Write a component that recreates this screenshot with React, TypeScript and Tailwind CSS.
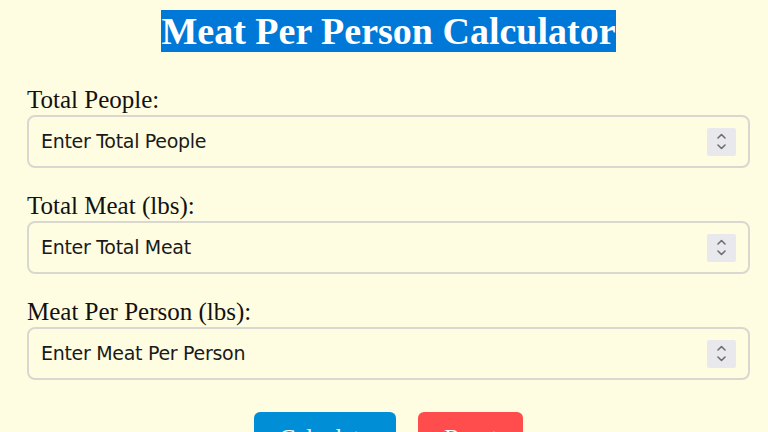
const fields = [
  { label: "Total People:", placeholder: "Enter Total People" },
  { label: "Total Meat (lbs):", placeholder: "Enter Total Meat" },
  { label: "Meat Per Person (lbs):", placeholder: "Enter Meat Per Person" },
]

function Spinner() {
  return (
    <div className="flex flex-col items-center justify-center gap-[5px] w-[29px] h-[28px] bg-[#e9e9ed] rounded-[2px] shrink-0">
      <svg width="9" height="6" viewBox="0 0 9 6" fill="none">
        <path d="M1 5 L4.5 1.5 L8 5" stroke="#6e6e78" strokeWidth="1.6" strokeLinecap="round" strokeLinejoin="round" />
      </svg>
      <svg width="9" height="6" viewBox="0 0 9 6" fill="none">
        <path d="M1 1 L4.5 4.5 L8 1" stroke="#6e6e78" strokeWidth="1.6" strokeLinecap="round" strokeLinejoin="round" />
      </svg>
    </div>
  )
}

export default function App() {
  return (
    <div className="min-h-screen w-full bg-[#fffde1] font-['Liberation_Serif',serif] text-[#111]">
      <div className="w-[723px] ml-[27px] flex flex-col">
        {/* Title */}
        <h1 className="mt-[10px] text-center text-[38px] leading-[42px] font-bold">
          <span className="bg-[#0078d7] text-white">Meat Per Person Calculator</span>
        </h1>

        {/* Fields */}
        <div className="mt-[34px] flex flex-col gap-[24px]">
          {fields.map((f) => (
            <div key={f.label} className="flex flex-col">
              <label className="text-[25px] leading-[27px]">{f.label}</label>
              <div className="mt-[2px] h-[53px] flex items-center pl-[12px] pr-[12px] border-2 border-[#d9d8d0] rounded-[8px] bg-[#fffde1]">
                <input
                  type="text"
                  placeholder={f.placeholder}
                  className="flex-1 min-w-0 bg-transparent outline-none text-[19px] tracking-[-0.3px] font-['DejaVu_Sans',sans-serif] placeholder:text-[#1a1a1a] text-[#1a1a1a]"
                />
                <Spinner />
              </div>
            </div>
          ))}
        </div>

        {/* Buttons */}
        <div className="mt-[32px] flex justify-center gap-[22px]">
          <button className="bg-[#008fd6] text-white text-[24px] leading-[27px] px-[26px] py-3 rounded-[6px]">
            Calculate
          </button>
          <button className="bg-[#ff4c4c] text-white text-[24px] leading-[27px] px-[26px] py-3 rounded-[6px]">
            Reset
          </button>
        </div>
      </div>
    </div>
  )
}
